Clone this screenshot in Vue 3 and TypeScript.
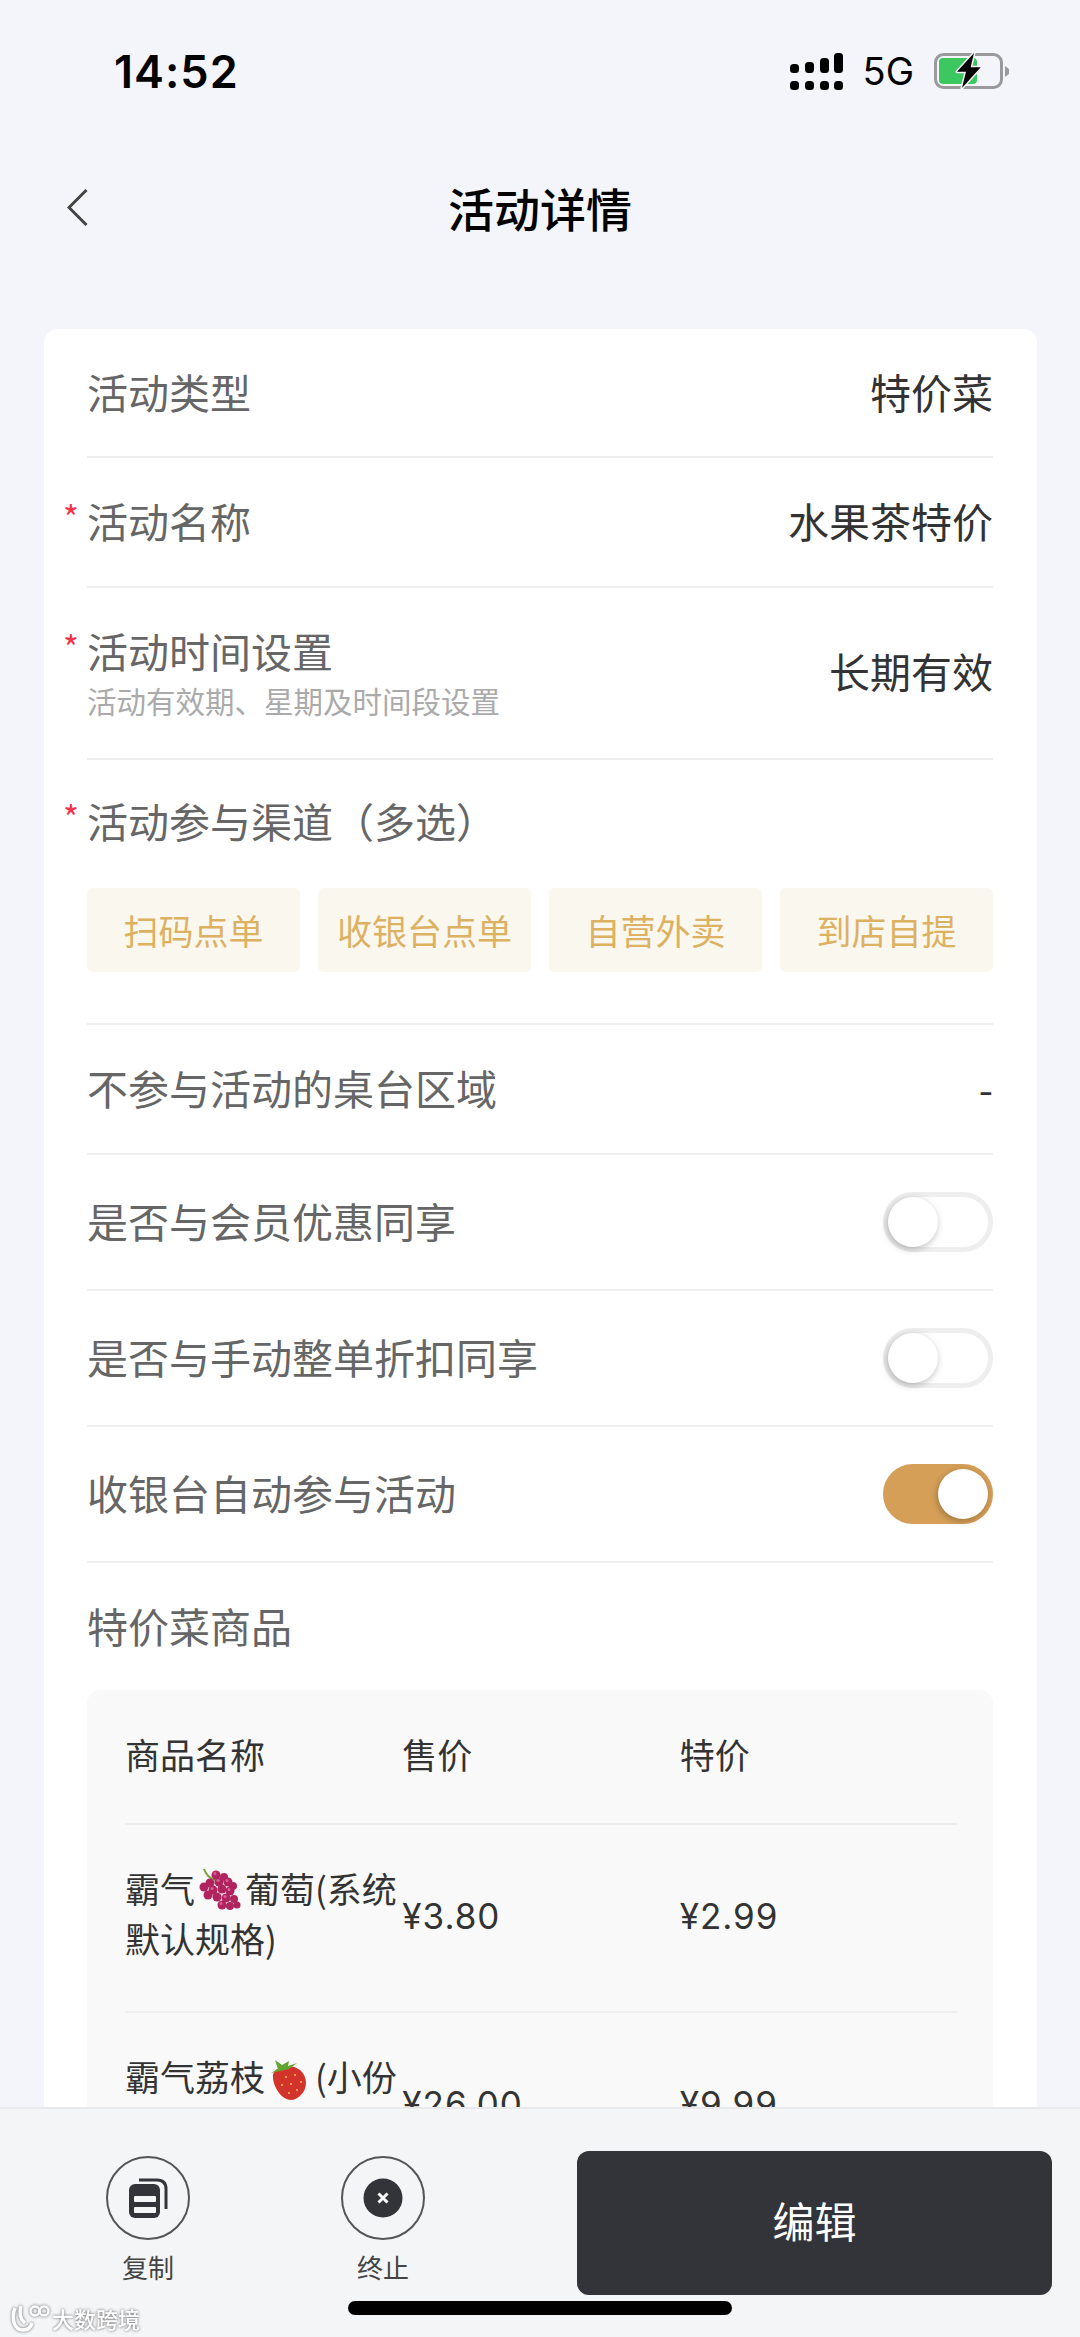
<script setup lang="ts">
import { ref } from "vue";

const channels = ["扫码点单", "收银台点单", "自营外卖", "到店自提"];

const switches = ref([
  { label: "是否与会员优惠同享", on: false },
  { label: "是否与手动整单折扣同享", on: false },
  { label: "收银台自动参与活动", on: true },
]);
</script>

<template>
  <div class="page">
    <div class="status">
      <span class="time">14:52</span>
      <div class="status-right">
        <svg class="signal" width="53" height="37" viewBox="0 0 53 37" fill="#000">
          <rect x="0" y="11" width="9" height="9" rx="3.5" />
          <rect x="15" y="9" width="9" height="11" rx="3.5" />
          <rect x="30" y="5" width="9" height="15" rx="3.5" />
          <rect x="44" y="0" width="9" height="20" rx="3.5" />
          <rect x="0" y="28" width="9" height="9" rx="3.5" />
          <rect x="15" y="28" width="9" height="9" rx="3.5" />
          <rect x="30" y="28" width="9" height="9" rx="3.5" />
          <rect x="44" y="28" width="9" height="9" rx="3.5" />
        </svg>
        <span class="net">5G</span>
        <svg class="battery" width="76" height="36" viewBox="0 0 76 36">
          <rect x="1.5" y="1.5" width="66" height="33" rx="8" fill="none" stroke="#9a9a9c" stroke-width="3" />
          <path d="M71 13 L75 16 V21 L71 24 Z" fill="#9a9a9c" />
          <rect x="5" y="5" width="38" height="26" rx="4" fill="#3cc85f" />
          <path d="M40 0 L23 18.7 H32 L28 35 L46.7 14.3 H36.7 Z" fill="#000" stroke="#f3f5fa" stroke-width="3" paint-order="stroke" stroke-linejoin="round" />
        </svg>
      </div>
    </div>

    <div class="nav">
      <svg class="back" width="21" height="37" viewBox="0 0 21 37" fill="none">
        <path d="M19.5 1 L2 18.5 L19.5 36" stroke="#444" stroke-width="3" />
      </svg>
      <h1 class="title">活动详情</h1>
    </div>

    <div class="content">
      <div class="card">
        <div class="row row-type">
          <span class="label">活动类型</span>
          <span class="value">特价菜</span>
        </div>
        <div class="row row-name">
          <span class="label required">活动名称</span>
          <span class="value">水果茶特价</span>
        </div>
        <div class="row row-time">
          <div class="time-text">
            <div class="label required">活动时间设置</div>
            <div class="sub">活动有效期、星期及时间段设置</div>
          </div>
          <span class="value">长期有效</span>
        </div>
        <div class="channel-block">
          <div class="label required">活动参与渠道（多选）</div>
          <div class="tags">
            <span v-for="c in channels" :key="c" class="tag">{{ c }}</span>
          </div>
        </div>
        <div class="row row-area">
          <span class="label">不参与活动的桌台区域</span>
          <span class="value">-</span>
        </div>
        <div v-for="s in switches" :key="s.label" class="row row-switch">
          <span class="label">{{ s.label }}</span>
          <span :class="['switch', { on: s.on }]" @click="s.on = !s.on"><i class="knob"></i></span>
        </div>

        <div class="goods-title label">特价菜商品</div>
        <div class="table">
          <div class="thead">
            <span>商品名称</span>
            <span>售价</span>
            <span>特价</span>
          </div>
          <div class="tr">
            <div class="name">
              霸气<svg class="emoji" width="44" height="44" viewBox="0 0 44 44">
                <path d="M6 1 C8 7 11 10 17 12" stroke="#7da13a" stroke-width="2" fill="none" />
                <g fill="#b0235f">
                  <circle cx="18" cy="7" r="4.5" /><circle cx="26" cy="9" r="4" /><circle cx="30" cy="14" r="4.5" />
                  <circle cx="12" cy="15" r="4.5" /><circle cx="21" cy="14" r="4.5" /><circle cx="35" cy="18" r="4" />
                  <circle cx="6" cy="19" r="4.5" /><circle cx="15" cy="22" r="4.5" /><circle cx="24" cy="21" r="4.5" />
                  <circle cx="32" cy="23" r="4.5" /><circle cx="10" cy="27" r="4.5" /><circle cx="19" cy="29" r="4.5" />
                  <circle cx="28" cy="30" r="4.5" /><circle cx="36" cy="31" r="4" /><circle cx="24" cy="37" r="4.5" />
                  <circle cx="32" cy="38" r="4" /><circle cx="39" cy="37" r="3.5" />
                </g>
                <g fill="#d9609a">
                  <circle cx="17" cy="5.5" r="1.5" /><circle cx="29" cy="12.5" r="1.5" /><circle cx="20" cy="12.5" r="1.5" />
                  <circle cx="14" cy="20.5" r="1.5" /><circle cx="31" cy="21.5" r="1.5" /><circle cx="27" cy="28.5" r="1.5" />
                  <circle cx="23" cy="35.5" r="1.5" />
                </g>
              </svg>葡萄(系统<br />默认规格)
            </div>
            <span class="price">¥3.80</span>
            <span class="price">¥2.99</span>
          </div>
          <div class="tr">
            <div class="name">
              霸气荔枝<svg class="emoji berry" width="38" height="42" viewBox="0 0 38 42">
                <path d="M13 9 C24 5 37 12 37 25 C37 35 28 42 22 42 C12 42 3 27 4 17 C5 12 9 10 13 9 Z" fill="#d2332b" />
                <path d="M2 15 L9 11 L6 2 L13 7 L20 3 L19 8 L28 5 L20 11 L11 13 Z" fill="#5fa52f" />
                <g fill="#f2c14e">
                  <circle cx="17" cy="19" r="1" /><circle cx="26" cy="17" r="1" /><circle cx="32" cy="24" r="1" />
                  <circle cx="22" cy="26" r="1" /><circle cx="13" cy="27" r="1" /><circle cx="28" cy="32" r="1" />
                  <circle cx="20" cy="35" r="1" />
                </g>
              </svg>(小份<br />装)
            </div>
            <span class="price">¥26.00</span>
            <span class="price">¥9.99</span>
          </div>
        </div>
      </div>
    </div>

    <div class="footer">
      <div class="action">
        <span class="circle">
          <svg width="40" height="41" viewBox="0 0 40 41" fill="none">
            <path d="M11 2 H29 Q38 2 38 11 V31" stroke="#33343a" stroke-width="3" />
            <rect x="1" y="6" width="31" height="34" rx="6" fill="#33343a" />
            <rect x="6" y="18" width="22" height="6" rx="1" fill="#f4f5f7" />
            <rect x="6" y="29" width="22" height="6" rx="1" fill="#f4f5f7" />
          </svg>
        </span>
        <span class="action-text">复制</span>
      </div>
      <div class="action">
        <span class="circle">
          <svg width="40" height="40" viewBox="0 0 40 40">
            <circle cx="20" cy="20" r="19.5" fill="#33343a" />
            <path d="M15.5 15.5 L24.5 24.5 M24.5 15.5 L15.5 24.5" stroke="#fff" stroke-width="3" />
          </svg>
        </span>
        <span class="action-text">终止</span>
      </div>
      <button class="edit">编辑</button>
    </div>

    <div class="home-bar"></div>
    <div class="watermark">
      <svg width="40" height="28" viewBox="0 0 40 28" fill="none" stroke="#fff" stroke-width="3.4">
        <path d="M5 4 C1 14 4 26 13 26 C18 26 21 23 22 19" />
        <path d="M11 2 C9 9 10 15 15 19" />
        <circle cx="25" cy="7" r="4.5" stroke-width="2.4" />
        <circle cx="34" cy="7" r="4.5" stroke-width="2.4" />
      </svg>
      <span>大数跨境</span>
    </div>
  </div>
</template>

<style scoped>
.page {
  position: relative;
  display: flex;
  flex-direction: column;
  width: 1080px;
  height: 2337px;
  overflow: hidden;
  background: #f3f5fa;
  font-family: "Noto Sans CJK SC", "Noto Sans", sans-serif;
  color: #333;
}
.status {
  flex: none;
  height: 142px;
  display: flex;
  justify-content: space-between;
  align-items: center;
  padding: 0 70px 0 114px;
}
.time {
  font-family: Inter, sans-serif;
  font-size: 45px;
  font-weight: 600;
  letter-spacing: 1px;
  color: #000;
}
.status-right {
  display: flex;
  align-items: center;
}
.net {
  margin: 0 20px;
  font-family: Inter, sans-serif;
  font-size: 38px;
  color: #000;
}
.nav {
  flex: none;
  position: relative;
  box-sizing: border-box;
  height: 136px;
  padding-bottom: 6px;
  display: flex;
  align-items: center;
  justify-content: center;
}
.back {
  position: absolute;
  left: 67px;
  top: 47px;
}
.title {
  margin: 0;
  font-size: 46px;
  font-weight: 500;
  color: #000;
}
.content {
  flex: 1;
  min-height: 0;
  overflow: hidden;
  padding: 51px 43px 0 44px;
}
.card {
  padding: 0 44px 0 43px;
  background: #fff;
  border-radius: 14px;
}
.row {
  box-sizing: border-box;
  display: flex;
  justify-content: space-between;
  align-items: center;
  border-bottom: 2px solid #eee;
}
.row-type {
  height: 129px;
}
.row-name,
.row-area {
  height: 130px;
}
.row-time {
  height: 172px;
}
.time-text {
  margin-top: -2px;
}
.row > .label,
.row > .value {
  margin-top: -4px;
}
.row-time > .value {
  margin-top: -6px;
}
.row-switch {
  height: 136px;
}
.label {
  position: relative;
  font-size: 41px;
  line-height: 56px;
  color: #666;
}
.required::before {
  content: "*";
  position: absolute;
  left: -24px;
  top: -3px;
  font-size: 34px;
  color: #f5324a;
}
.value {
  font-size: 41px;
  color: #333;
}
.sub {
  font-size: 29.5px;
  line-height: 44px;
  color: #aaa;
}
.channel-block {
  padding-top: 32px;
  height: 265px;
  box-sizing: border-box;
  border-bottom: 2px solid #eee;
}
.tags {
  display: grid;
  grid-template-columns: repeat(4, 1fr);
  gap: 18px;
  margin-top: 40px;
}
.tag {
  height: 84px;
  padding-bottom: 2px;
  box-sizing: border-box;
  display: flex;
  align-items: center;
  justify-content: center;
  font-size: 35px;
  color: #dcb162;
  background: #faf7ef;
  border-radius: 6px;
}
.switch {
  position: relative;
  box-sizing: border-box;
  width: 110px;
  height: 60px;
  border: 5px solid #eee;
  border-radius: 30px;
  background: #fff;
}
.switch.on {
  background: #d69f58;
  border-color: #d69f58;
}
.knob {
  position: absolute;
  left: 0;
  top: 0;
  width: 50px;
  height: 50px;
  border-radius: 50%;
  background: #fff;
  box-shadow: -1px 2px 7px rgba(0, 0, 0, 0.28);
}
.switch.on .knob {
  left: 50px;
}
.goods-title {
  display: block;
  margin-top: 34px;
}
.table {
  margin-top: 37px;
  padding: 0 36px 0 38px;
  background: #f9f9f9;
  border-radius: 14px;
}
.thead,
.tr {
  box-sizing: border-box;
  display: grid;
  grid-template-columns: repeat(3, 1fr);
  font-size: 35px;
}
.thead {
  height: 135px;
  padding-bottom: 6px;
  align-items: center;
  border-bottom: 2px solid #eee;
}
.tr {
  height: 188px;
  padding-bottom: 4px;
  align-items: center;
  border-bottom: 2px solid #eee;
}
.name {
  align-self: start;
  margin-top: 38px;
  line-height: 50px;
  white-space: nowrap;
}
.emoji {
  vertical-align: -9px;
  margin: 0 3px;
}
.berry {
  margin: 0 8px 0 4px;
}
.price {
  font-family: Inter, sans-serif;
  font-size: 35px;
  letter-spacing: 1px;
}
.footer {
  flex: none;
  box-sizing: border-box;
  height: 230px;
  display: flex;
  align-items: flex-start;
  gap: 115px;
  padding: 42px 28px 0 88px;
  background: #f4f5f7;
  border-top: 2px solid #e8e9eb;
}
.action {
  width: 120px;
  display: flex;
  flex-direction: column;
  align-items: center;
  margin-top: 5px;
}
.circle {
  box-sizing: border-box;
  width: 84px;
  height: 84px;
  display: flex;
  align-items: center;
  justify-content: center;
  border: 2px solid #555;
  border-radius: 50%;
}
.action-text {
  margin-top: 8px;
  font-size: 26px;
  line-height: 38px;
  color: #444;
}
.edit {
  margin-left: auto;
  width: 475px;
  height: 144px;
  padding: 0 0 8px;
  border: none;
  border-radius: 12px;
  background: #33343a;
  color: #fff;
  font-family: inherit;
  font-size: 42px;
}
.home-bar {
  position: absolute;
  left: 348px;
  top: 2301px;
  width: 384px;
  height: 14px;
  border-radius: 7px;
  background: #000;
}
.watermark {
  position: absolute;
  left: 10px;
  top: 2302px;
  display: flex;
  align-items: center;
  gap: 2px;
  font-size: 22px;
  font-weight: 500;
  color: #fff;
  filter: drop-shadow(0 0 1.5px rgba(0, 0, 0, 0.6));
}
</style>
